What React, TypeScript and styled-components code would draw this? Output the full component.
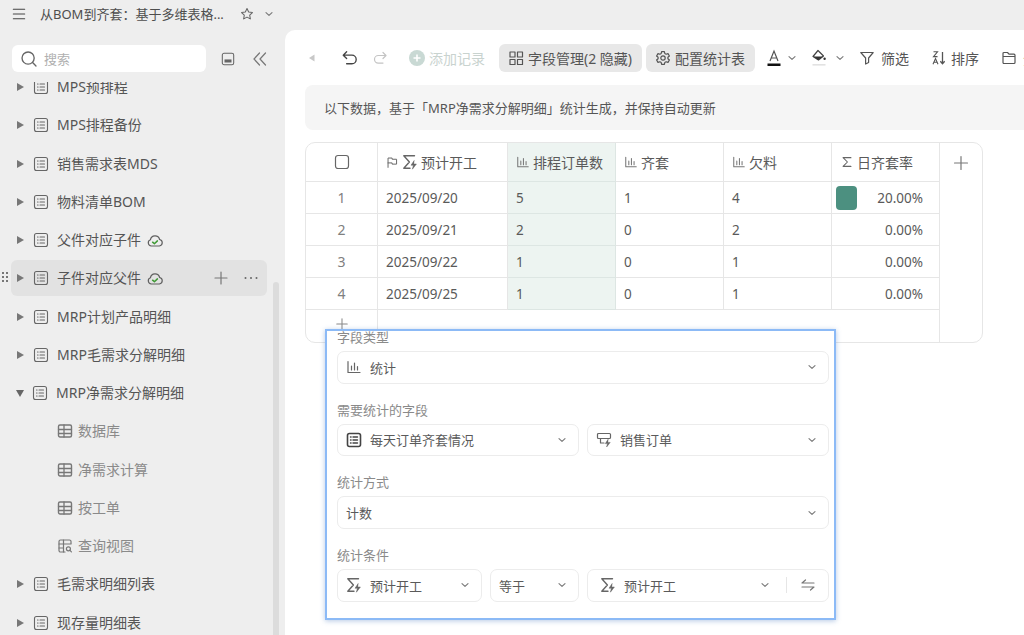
import React from "react";
import styled, { createGlobalStyle } from "styled-components";

const GlobalStyle = createGlobalStyle`
  html, body {
    margin: 0;
    padding: 0;
    height: 100%;
    overflow: hidden;
  }
  body {
    background: #eeeeee;
    font-family: "Noto Sans", "Noto Sans CJK SC", sans-serif;
    color: #4a4a4a;
  }
  * {
    box-sizing: border-box;
  }
`;

const Root = styled.div`
  position: relative;
  width: 1024px;
  height: 635px;
  overflow: hidden;
  display: flex;
  flex-direction: column;
`;

const TitleBar = styled.header`
  height: 30px;
  flex: none;
  display: flex;
  align-items: center;
  padding: 0 0 3px 12px;
  font-size: 13px;
  color: #4d4d4d;
  svg {
    flex: none;
  }
`;

const TitleText = styled.span`
  margin: 0 13px 0 14px;
  width: 187px;
  white-space: nowrap;
  line-height: 20px;
`;

const TitleGap = styled.span`
  width: 10px;
`;

const Body = styled.div`
  flex: 1;
  min-height: 0;
  display: flex;
`;

const Sidebar = styled.aside`
  width: 285px;
  flex: none;
  position: relative;
  display: flex;
  flex-direction: column;
`;

const SearchRow = styled.div`
  height: 52px;
  flex: none;
  display: flex;
  align-items: flex-start;
  padding: 15px 0 0 12px;
`;

const SearchBox = styled.div`
  width: 194px;
  height: 27px;
  background: #fff;
  border-radius: 6px;
  display: flex;
  align-items: center;
  padding-left: 8px;
  gap: 6px;
  font-size: 13px;
  color: #b0b0b0;
`;

const SearchTool = styled.span<{ $gap: number }>`
  margin-left: ${(p) => p.$gap}px;
  height: 27px;
  display: flex;
  align-items: center;
`;

const TreeClip = styled.div`
  flex: 1;
  min-height: 0;
  overflow: hidden;
`;

const Tree = styled.ul`
  list-style: none;
  margin: -13px 0 0;
  padding: 0 0 0 11px;
  display: flex;
  flex-direction: column;
  gap: 2.25px;
`;

const TreeRow = styled.li<{ $active?: boolean; $child?: boolean }>`
  position: relative;
  width: 256px;
  height: 36px;
  flex: none;
  display: flex;
  align-items: center;
  border-radius: 6px;
  padding-left: ${(p) => (p.$child ? "46px" : "6px")};
  font-size: 14px;
  color: ${(p) => (p.$child ? "#8a8a8a" : "#555")};
  background: ${(p) => (p.$active ? "#e2e2e2" : "transparent")};
  white-space: nowrap;
`;

const Caret = styled.span<{ $open?: boolean }>`
  width: 0;
  height: 0;
  margin-right: 9px;
  ${(p) =>
    p.$open
      ? `border-left: 4px solid transparent; border-right: 4px solid transparent; border-top: 7px solid #666; margin-left: -1px; margin-right: 8px;`
      : `border-top: 4px solid transparent; border-bottom: 4px solid transparent; border-left: 7px solid #777;`}
`;

const TreeLabel = styled.span<{ $child?: boolean }>`
  margin-left: ${(p) => (p.$child ? "5px" : "8px")};
  line-height: 20px;
`;

const CloudMark = styled.span`
  margin-left: 6px;
  display: flex;
`;

const RowActions = styled.span`
  margin-left: auto;
  padding-right: 8px;
  display: flex;
  align-items: center;
  gap: 14px;
`;

const DragDots = styled.span`
  position: absolute;
  left: -9px;
  top: 12px;
  display: flex;
`;

const ScrollThumb = styled.div`
  position: absolute;
  left: 273px;
  top: 252px;
  bottom: 0;
  width: 6px;
  background: #dcdcdc;
  border-radius: 3px 3px 0 0;
`;

const Main = styled.main`
  flex: 1;
  min-width: 0;
  background: #fff;
  border-top-left-radius: 10px;
  padding: 14px 0 0 20px;
  overflow: hidden;
`;

const Toolbar = styled.div`
  height: 28px;
  display: flex;
  align-items: center;
  font-size: 14px;
  color: #555;
  white-space: nowrap;
`;

const ToolItem = styled.span<{ $left?: number; $muted?: boolean; $gap?: number }>`
  flex: none;
  display: flex;
  align-items: center;
  gap: ${(p) => p.$gap ?? 4}px;
  margin-left: ${(p) => p.$left ?? 0}px;
  color: ${(p) => (p.$muted ? "#c9d3cf" : "inherit")};
`;

const ToolButton = styled.span<{ $left: number }>`
  flex: none;
  height: 28px;
  margin-left: ${(p) => p.$left}px;
  padding: 0 10px 0 9px;
  display: flex;
  align-items: center;
  gap: 4px;
  background: #e8e8e8;
  border-radius: 6px;
`;

const Notice = styled.div`
  margin-top: 13px;
  height: 45px;
  background: #f5f5f5;
  border-radius: 8px 0 0 8px;
  display: flex;
  align-items: center;
  padding-left: 19px;
  font-size: 13px;
  color: #555;
`;

const TableFrame = styled.div`
  margin-top: 12px;
  width: 678px;
  border: 1px solid #e6e6e6;
  border-radius: 10px;
  overflow: hidden;
  font-size: 13.5px;
  color: #5a5a5a;
`;

const TableRow = styled.div<{ $head?: boolean; $add?: boolean }>`
  display: grid;
  grid-template-columns: ${(p) => (p.$add ? "72px 562px 1fr" : "72px 130px 108px 108px 108px 108px 1fr")};
  height: ${(p) => (p.$head ? "39px" : "32px")};
`;

const Cell = styled.div<{ $hot?: boolean; $center?: boolean; $right?: boolean; $open?: boolean }>`
  position: relative;
  display: flex;
  align-items: center;
  gap: 4px;
  padding: 0 8px;
  justify-content: ${(p) => (p.$center ? "center" : p.$right ? "flex-end" : "flex-start")};
  border-right: 1px solid ${(p) => (p.$hot ? "#dde6e3" : "#e6e6e6")};
  border-bottom: ${(p) => (p.$open ? "none" : `1px solid ${p.$hot ? "#dde6e3" : "#e6e6e6"}`)};
  background: ${(p) => (p.$hot ? "#edf4f1" : "transparent")};
  white-space: nowrap;
  &:last-child {
    border-right: none;
  }
`;

const HeadCell = styled(Cell)`
  font-size: 14px;
  gap: 3px;
`;

const AddCell = styled(Cell)`
  align-items: flex-start;
  padding-top: 7px;
`;

const RowNumber = styled.span`
  color: #808080;
  font-size: 14px;
  margin-top: -1px;
`;

const RateBar = styled.span<{ $pct: number }>`
  position: absolute;
  left: 4px;
  top: 4px;
  bottom: 3px;
  width: ${(p) => p.$pct}%;
  background: #4c9080;
  border-radius: 4px;
`;

const RateText = styled.span`
  padding-right: 8px;
  position: relative;
`;

const Panel = styled.section`
  position: absolute;
  left: 325px;
  top: 329px;
  width: 511px;
  height: 291px;
  background: #fff;
  border: 2px solid #8cbaf6;
  box-shadow: 0 1px 5px rgba(70, 120, 190, 0.4);
  overflow: hidden;
  padding: 0 5px 0 10px;
  font-size: 13px;
  color: #5a5a5a;
`;

const PanelInner = styled.div`
  margin-top: -3px;
  display: flex;
  flex-direction: column;
  gap: 17.2px;
`;

const Field = styled.div`
  display: flex;
  flex-direction: column;
  gap: 3px;
`;

const FieldLabel = styled.div`
  height: 20px;
  line-height: 18px;
  color: #8a8a8a;
`;

const SelectRow = styled.div<{ $cols: string }>`
  display: grid;
  grid-template-columns: ${(p) => p.$cols};
  gap: 8px;
`;

const Select = styled.div<{ $padLeft?: number; $padRight?: number }>`
  height: 32.5px;
  border: 1px solid #ececec;
  border-radius: 7px;
  display: flex;
  align-items: center;
  padding: 0 ${(p) => p.$padRight ?? 8}px 0 ${(p) => p.$padLeft ?? 8}px;
  gap: 8px;
  color: #5a5a5a;
  min-width: 0;
  white-space: nowrap;
`;

const SelectChevron = styled.span<{ $right?: number }>`
  margin-left: auto;
  margin-right: ${(p) => p.$right ?? 3}px;
  display: flex;
`;

const SwapDivider = styled.span`
  width: 1px;
  height: 16px;
  background: #e6e6e6;
  margin: 0 5px 0 0;
`;

const AddCondition = styled.div`
  display: flex;
  align-items: center;
  gap: 4px;
  padding-left: 6px;
  color: #5a5a5a;
`;

type IconProps = { size?: number; color?: string };

const Svg = ({ size = 16, color = "#666", children }: IconProps & { children: React.ReactNode }) => (
  <svg width={size} height={size} viewBox="0 0 16 16" fill="none" stroke={color} strokeWidth="1.2" strokeLinecap="round" strokeLinejoin="round">
    {children}
  </svg>
);

const Chevron = ({ color = "#777" }: IconProps) => (
  <svg width="10" height="10" viewBox="0 0 10 10" fill="none" stroke={color} strokeWidth="1.1" strokeLinecap="round" strokeLinejoin="round">
    <path d="M2 3.6 5 6.4 8 3.6" />
  </svg>
);

const ListDoc = ({ color = "#666", heavy }: IconProps & { heavy?: boolean }) => (
  <Svg color={color}>
    <rect x="1.5" y="1.5" width="13" height="13" rx="2" strokeWidth={heavy ? 1.6 : 1.1} />
    <path d="M4.5 5h.6M7 5h4.5M4.5 8h.6M7 8h4.5M4.5 11h.6M7 11h4.5" strokeWidth={heavy ? 1.4 : 1.1} />
  </Svg>
);

const GridDoc = () => (
  <Svg color="#777">
    <rect x="1.5" y="2" width="13" height="12" rx="1.5" strokeWidth="1.4" />
    <path d="M1.5 6.5h13M1.5 10.5h13M7 2v12" strokeWidth="1.3" />
  </Svg>
);

const QueryDoc = () => (
  <Svg color="#777">
    <path d="M14 5.5V3.5A1.5 1.5 0 0 0 12.5 2h-9A1.5 1.5 0 0 0 2 3.5v9A1.5 1.5 0 0 0 3.5 14H8" />
    <path d="M2 6h12M6.5 2v12M2 10h4.5" />
    <circle cx="11.4" cy="10.8" r="2" />
    <path d="m13 12.4 1.4 1.4" />
  </Svg>
);

const CloudCheck = () => (
  <svg width="16" height="16" viewBox="0 0 16 16" fill="none" strokeLinecap="round" strokeLinejoin="round">
    <path d="M4.3 14a3.2 3.2 0 0 1-.9-6.2 4.7 4.7 0 0 1 9.2-.3 3.3 3.3 0 0 1-.2 6.5z" stroke="#5f5f5f" strokeWidth="1.2" />
    <path d="m5.6 10.2 1.8 1.5 3-2.8" stroke="#3f9a35" strokeWidth="1.5" />
  </svg>
);

const BarChart = ({ size = 14, color = "#777" }: IconProps) => (
  <Svg size={size} color={color}>
    <path d="M2 2.5V13.5H14M5.5 7v4M8.5 4v7M11.5 7.5V11" />
  </Svg>
);

const SigmaBolt = ({ size = 16, color = "#666" }: IconProps) => (
  <Svg size={size} color={color}>
    <path d="M12.5 1.8H1.8L7.4 8l-5.6 6.2H8" strokeWidth="1.4" />
    <path d="M12 6.8 9 11.2h2.4L10.4 15.2l4-5.2h-2.5z" fill={color} strokeWidth="0.5" />
  </Svg>
);

const DotsGrip = () => (
  <svg width="7" height="11" viewBox="0 0 7 11" fill="#777">
    {[0, 4, 8].map((y) => (
      <React.Fragment key={y}>
        <rect x="0" y={y} width="2" height="2" />
        <rect x="4" y={y} width="2" height="2" />
      </React.Fragment>
    ))}
  </svg>
);

const treeItems = [
  { label: "MPS预排程" },
  { label: "MPS排程备份" },
  { label: "销售需求表MDS" },
  { label: "物料清单BOM" },
  { label: "父件对应子件", cloud: true },
  { label: "子件对应父件", cloud: true, active: true },
  { label: "MRP计划产品明细" },
  { label: "MRP毛需求分解明细" },
  { label: "MRP净需求分解明细", open: true },
  { label: "数据库", child: "grid" },
  { label: "净需求计算", child: "grid" },
  { label: "按工单", child: "grid" },
  { label: "查询视图", child: "query" },
  { label: "毛需求明细列表" },
  { label: "现存量明细表" },
];

const rows = [
  { n: 1, date: "2025/09/20", plan: 5, full: 1, lack: 4, rate: "20.00%", pct: 20 },
  { n: 2, date: "2025/09/21", plan: 2, full: 0, lack: 2, rate: "0.00%", pct: 0 },
  { n: 3, date: "2025/09/22", plan: 1, full: 0, lack: 1, rate: "0.00%", pct: 0 },
  { n: 4, date: "2025/09/25", plan: 1, full: 0, lack: 1, rate: "0.00%", pct: 0 },
];

const App = () => {
  return (
    <Root>
      <GlobalStyle />
      <TitleBar>
        <Svg size={14} color="#444">
          <path d="M1.5 2.5h13M1.5 8h13M1.5 13.5h13" />
        </Svg>
        <TitleText>从BOM到齐套：基于多维表格...</TitleText>
        <Svg size={14} color="#666">
          <path d="m8 1.8 1.9 3.9 4.3.6-3.1 3 .7 4.3L8 11.6l-3.8 2 .7-4.3-3.1-3 4.3-.6z" />
        </Svg>
        <TitleGap />
        <Chevron />
      </TitleBar>
      <Body>
        <Sidebar>
          <SearchRow>
            <SearchBox>
              <Svg size={18} color="#666">
                <circle cx="7.2" cy="7.2" r="5.4" />
                <path d="m11.2 11.2 3 3" />
              </Svg>
              搜索
            </SearchBox>
            <SearchTool $gap={15}>
              <Svg size={14} color="#666">
                <rect x="1.5" y="1.5" width="13" height="13" rx="2" />
                <rect x="4" y="8.5" width="8" height="3.5" fill="#666" stroke="none" />
              </Svg>
            </SearchTool>
            <SearchTool $gap={17}>
              <Svg size={16} color="#777">
                <path d="M7.5 2 2 8l5.5 6M13.5 2 8 8l5.5 6" />
              </Svg>
            </SearchTool>
          </SearchRow>
          <TreeClip>
            <Tree>
              {treeItems.map((item) => (
                <TreeRow key={item.label} $active={item.active} $child={!!item.child}>
                  {item.active && (
                    <DragDots>
                      <DotsGrip />
                    </DragDots>
                  )}
                  {!item.child && <Caret $open={item.open} />}
                  {item.child === "grid" && <GridDoc />}
                  {item.child === "query" && <QueryDoc />}
                  {!item.child && <ListDoc />}
                  <TreeLabel $child={!!item.child}>{item.label}</TreeLabel>
                  {item.cloud && (
                    <CloudMark>
                      <CloudCheck />
                    </CloudMark>
                  )}
                  {item.active && (
                    <RowActions>
                      <Svg size={16} color="#777">
                        <path d="M8 2v12M2 8h12" />
                      </Svg>
                      <svg width="16" height="16" viewBox="0 0 16 16" fill="#666">
                        <circle cx="2.5" cy="8" r="1" />
                        <circle cx="8" cy="8" r="1" />
                        <circle cx="13.5" cy="8" r="1" />
                      </svg>
                    </RowActions>
                  )}
                </TreeRow>
              ))}
            </Tree>
          </TreeClip>
          <ScrollThumb />
        </Sidebar>
        <Main>
          <Toolbar>
            <ToolItem $left={3}>
              <svg width="8" height="8" viewBox="0 0 8 8" fill="#c8c8c8">
                <path d="M6.5 0.5v7L1 4z" />
              </svg>
            </ToolItem>
            <ToolItem $left={25}>
              <Svg size={18} color="#444">
                <path d="M2.5 5.5h7.2a3.8 3.8 0 0 1 0 7.6H5M5 2.5l-3 3 3 3" />
              </Svg>
            </ToolItem>
            <ToolItem $left={13}>
              <Svg size={16} color="#c4c4c4">
                <path d="M13.5 5.5H6.3a3.8 3.8 0 0 0 0 7.6H11M11 2.5l3 3-3 3" />
              </Svg>
            </ToolItem>
            <ToolItem $left={21} $muted>
              <svg width="16" height="16" viewBox="0 0 16 16">
                <circle cx="8" cy="8" r="8" fill="#c9d9d4" />
                <path d="M8 4.5v7M4.5 8h7" stroke="#fff" strokeWidth="1.6" />
              </svg>
              添加记录
            </ToolItem>
            <ToolButton $left={14}>
              <Svg size={16} color="#555">
                <rect x="2" y="2" width="5" height="5" />
                <rect x="9.5" y="2" width="5" height="5" />
                <rect x="2" y="9.5" width="5" height="5" />
                <rect x="9.5" y="9.5" width="5" height="5" />
              </Svg>
              字段管理(2 隐藏)
            </ToolButton>
            <ToolButton $left={4}>
              <Svg size={16} color="#555">
                <path d="M6.6 1.6h2.8l.4 1.9 1.3.7 1.9-.6 1.4 2.4-1.5 1.3v1.4l1.5 1.3-1.4 2.4-1.9-.6-1.3.7-.4 1.9H6.6l-.4-1.9-1.3-.7-1.9.6-1.4-2.4L3.1 8.7V7.3L1.6 6l1.4-2.4 1.9.6 1.3-.7z" />
                <circle cx="8" cy="8" r="2.2" />
              </Svg>
              配置统计表
            </ToolButton>
            <ToolItem $left={11}>
              <svg width="16" height="18" viewBox="0 0 16 18" fill="none">
                <path d="M4 12 8 2l4 10M5.4 9h5.2" stroke="#555" strokeWidth="1.2" />
                <rect x="1.5" y="14.5" width="13" height="2.5" fill="#111" />
              </svg>
            </ToolItem>
            <ToolItem $left={5}>
              <Chevron />
            </ToolItem>
            <ToolItem $left={14}>
              <svg width="16" height="18" viewBox="0 0 16 18" fill="none">
                <path d="m7 1.5 5.5 5.5L7.5 11 2 7.5z" stroke="#444" strokeWidth="1.2" strokeLinejoin="round" />
                <path d="M2.5 7.5h9.5l-5 3.5z" fill="#333" />
                <circle cx="13.6" cy="9.8" r="1.2" fill="#333" />
                <rect x="1.5" y="15" width="13" height="1.6" fill="#e2e2e2" />
              </svg>
            </ToolItem>
            <ToolItem $left={8}>
              <Chevron />
            </ToolItem>
            <ToolItem $left={14} $gap={6}>
              <Svg size={16} color="#555">
                <path d="M1.8 2.5h12.4L9.6 8v4.5l-3 1.5V8z" />
              </Svg>
              筛选
            </ToolItem>
            <ToolItem $left={22}>
              <svg width="16" height="16" viewBox="0 0 16 16" fill="none" stroke="#555" strokeWidth="1.1">
                <path d="M2.5 1.8h4L2.5 6.6h4M2 14.2l2.5-5.6 2.5 5.6M3 12.2h3" />
                <path d="M11.5 2v11.5M9.3 11.3l2.2 2.4 2.2-2.4" strokeWidth="1.3" />
              </svg>
              排序
            </ToolItem>
            <ToolItem $left={22} $gap={6}>
              <Svg size={16} color="#555">
                <path d="M2 3.5A1 1 0 0 1 3 2.5h3.5L8 4.2h5a1 1 0 0 1 1 1v7.3a1 1 0 0 1-1 1H3a1 1 0 0 1-1-1zM2 6.5h12" />
              </Svg>
              分组
            </ToolItem>
          </Toolbar>
          <Notice>以下数据，基于「MRP净需求分解明细」统计生成，并保持自动更新</Notice>
          <TableFrame>
            <TableRow $head>
              <HeadCell $center>
                <Svg size={16} color="#666">
                  <rect x="1.5" y="1.5" width="13" height="13" rx="2.5" />
                </Svg>
              </HeadCell>
              <HeadCell>
                <Svg size={13} color="#666">
                  <path d="M2.5 14V2.5h5v1.5h5.5v6H7.5V8.5h-5" />
                </Svg>
                <SigmaBolt />
                预计开工
              </HeadCell>
              <HeadCell $hot>
                <BarChart />
                排程订单数
              </HeadCell>
              <HeadCell>
                <BarChart />
                齐套
              </HeadCell>
              <HeadCell>
                <BarChart />
                欠料
              </HeadCell>
              <HeadCell>
                <Svg size={14} color="#666">
                  <path d="M12.5 3h-9L8.5 8l-5 5h9" />
                </Svg>
                日齐套率
              </HeadCell>
              <HeadCell $center $open>
                <Svg size={16} color="#777">
                  <path d="M8 1.5v13M1.5 8h13" />
                </Svg>
              </HeadCell>
            </TableRow>
            {rows.map((r) => (
              <TableRow key={r.n}>
                <Cell $center>
                  <RowNumber>{r.n}</RowNumber>
                </Cell>
                <Cell>{r.date}</Cell>
                <Cell $hot>{r.plan}</Cell>
                <Cell>{r.full}</Cell>
                <Cell>{r.lack}</Cell>
                <Cell $right>
                  {r.pct > 0 && <RateBar $pct={r.pct} />}
                  <RateText>{r.rate}</RateText>
                </Cell>
                <Cell $open />
              </TableRow>
            ))}
            <TableRow $add>
              <AddCell $center $open>
                <Svg size={14} color="#888">
                  <path d="M8 2v12M2 8h12" />
                </Svg>
              </AddCell>
              <Cell $open />
              <Cell $open />
            </TableRow>
          </TableFrame>
        </Main>
      </Body>
      <Panel>
        <PanelInner>
          <Field>
            <FieldLabel>字段类型</FieldLabel>
            <Select>
              <BarChart size={16} color="#666" />
              统计
              <SelectChevron>
                <Chevron />
              </SelectChevron>
            </Select>
          </Field>
          <Field>
            <FieldLabel>需要统计的字段</FieldLabel>
            <SelectRow $cols="1fr 1fr">
              <Select>
                <ListDoc color="#444" heavy />
                每天订单齐套情况
                <SelectChevron>
                  <Chevron />
                </SelectChevron>
              </Select>
              <Select>
                <Svg size={16} color="#666">
                  <rect x="1.5" y="1.5" width="13" height="5" rx="1" />
                  <path d="M4.5 6.5V11h3.5" />
                  <path d="M12 7.5 9.3 11.6h2.2L10.6 15l3.6-4.6H12z" fill="#666" strokeWidth="0.5" />
                </Svg>
                销售订单
                <SelectChevron>
                  <Chevron />
                </SelectChevron>
              </Select>
            </SelectRow>
          </Field>
          <Field>
            <FieldLabel>统计方式</FieldLabel>
            <Select>
              计数
              <SelectChevron>
                <Chevron />
              </SelectChevron>
            </Select>
          </Field>
          <Field>
            <FieldLabel>统计条件</FieldLabel>
            <SelectRow $cols="145px 89px 1fr">
              <Select>
                <SigmaBolt />
                预计开工
                <SelectChevron>
                  <Chevron />
                </SelectChevron>
              </Select>
              <Select>
                等于
                <SelectChevron>
                  <Chevron />
                </SelectChevron>
              </Select>
              <Select $padLeft={12} $padRight={12}>
                <SigmaBolt />
                预计开工
                <SelectChevron $right={8}>
                  <Chevron />
                </SelectChevron>
                <SwapDivider />
                <Svg size={16} color="#777">
                  <path d="M14 6H2l3.5-3M2 10h12l-3.5 3" />
                </Svg>
              </Select>
            </SelectRow>
          </Field>
          <AddCondition>
            <Svg size={12} color="#555">
              <path d="M8 2v12M2 8h12" />
            </Svg>
            添加条件
          </AddCondition>
        </PanelInner>
      </Panel>
    </Root>
  );
};

export default App;
